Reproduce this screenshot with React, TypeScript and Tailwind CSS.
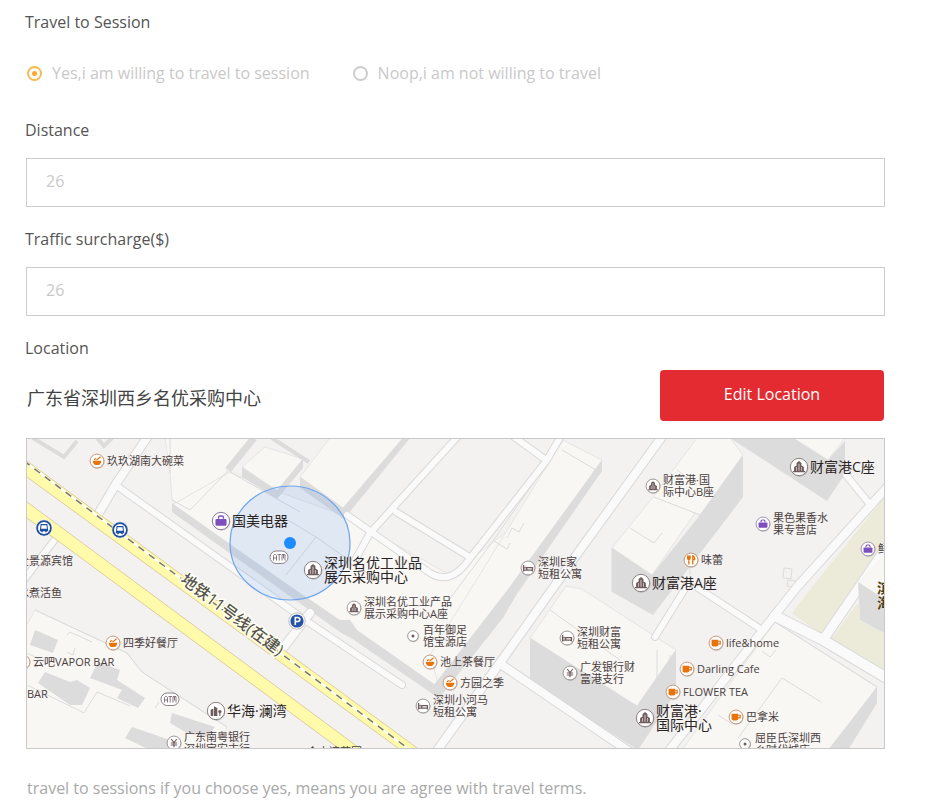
import { useState } from "react";

type IconKind =
  | "bowl" | "tower" | "bag" | "cup" | "bed" | "yen"
  | "atm" | "fork" | "dot" | "parking" | "bus" | "block" | "none";

type Place = {
  icon: IconKind;
  x: number;
  y: number;
  lines?: string[];
  large?: boolean;
};

const ORIGIN = { x: 27, y: 439 };

const PLACES: Place[] = [
  { icon: "bowl", x: 97, y: 461, lines: ["玖玖湖南大碗菜"] },
  { icon: "bag", x: 221, y: 521, lines: ["国美电器"], large: true },
  { icon: "atm", x: 279, y: 557 },
  { icon: "tower", x: 313, y: 570, lines: ["深圳名优工业品", "展示采购中心"], large: true },
  { icon: "tower", x: 354, y: 608, lines: ["深圳名优工业产品", "展示采购中心A座"] },
  { icon: "dot", x: 413, y: 636, lines: ["百年御足", "馆宝源店"] },
  { icon: "bowl", x: 430, y: 662, lines: ["池上茶餐厅"] },
  { icon: "bowl", x: 450, y: 683, lines: ["方园之季"] },
  { icon: "bed", x: 423, y: 706, lines: ["深圳小河马", "短租公寓"] },
  { icon: "bus", x: 44, y: 528 },
  { icon: "bus", x: 120, y: 530 },
  { icon: "none", x: 8, y: 561, lines: ["全景源宾馆"] },
  { icon: "none", x: 8, y: 593, lines: ["水煮活鱼"] },
  { icon: "bowl", x: 113, y: 643, lines: ["四季好餐厅"] },
  { icon: "bowl", x: 23, y: 662, lines: ["云吧VAPOR BAR"] },
  { icon: "none", x: 17, y: 694, lines: ["BAR"] },
  { icon: "atm", x: 170, y: 699 },
  { icon: "block", x: 216, y: 711, lines: ["华海·澜湾"], large: true },
  { icon: "yen", x: 174, y: 743, lines: ["广东南粤银行", "深圳宝安支行"] },
  { icon: "none", x: 297, y: 752, lines: ["金水湾花园"] },
  { icon: "parking", x: 297, y: 621 },
  { icon: "bed", x: 528, y: 568, lines: ["深圳E家", "短租公寓"] },
  { icon: "tower", x: 653, y: 486, lines: ["财富港·国", "际中心B座"] },
  { icon: "tower", x: 799, y: 467, lines: ["财富港C座"], large: true },
  { icon: "bag", x: 763, y: 524, lines: ["果色果香水", "果专营店"] },
  { icon: "fork", x: 691, y: 560, lines: ["味蕾"] },
  { icon: "tower", x: 641, y: 583, lines: ["财富港A座"], large: true },
  { icon: "bag", x: 868, y: 549, lines: ["鲜果园"] },
  { icon: "bed", x: 567, y: 638, lines: ["深圳财富", "短租公寓"] },
  { icon: "yen", x: 570, y: 673, lines: ["广发银行财", "富港支行"] },
  { icon: "cup", x: 716, y: 643, lines: ["life&home"] },
  { icon: "cup", x: 687, y: 669, lines: ["Darling Cafe"] },
  { icon: "cup", x: 673, y: 692, lines: ["FLOWER TEA"] },
  { icon: "tower", x: 645, y: 718, lines: ["财富港·", "国际中心"], large: true },
  { icon: "cup", x: 736, y: 717, lines: ["巴拿米"] },
  { icon: "dot", x: 745, y: 744, lines: ["屈臣氏深圳西", "乡时代城店"] },
];

const ROADS: { d: string; w: number }[] = [
  { d: "M148 436 L116 484 L97 516", w: 8 },
  { d: "M117 486 L308 622 L402 685", w: 6 },
  { d: "M310 613 L283 648", w: 8 },
  { d: "M56 538 L24 580", w: 6 },
  { d: "M460 434 L370 533 L354 562", w: 6 },
  { d: "M347 515 L430 573 Q448 584 464 566 L547 460 L562 434", w: 6 },
  { d: "M396 512 L468 556", w: 6 },
  { d: "M510 434 L546 460", w: 6 },
  { d: "M664 434 L580 550 L507 653 L436 752", w: 8 },
  { d: "M502 665 L630 752", w: 8 },
  { d: "M890 484 L797 587 L760 634 L668 752", w: 8 },
  { d: "M846 475 L868 502", w: 6 },
  { d: "M688 584 L655 637", w: 6 },
  { d: "M698 588 L762 630", w: 6 },
  { d: "M775 616 L823 640 L890 680", w: 10 },
  { d: "M823 640 L886 548", w: 9 },
];

const ROOFS = [
  "165,438 252,438 230,467 225,474 190,510 172,500 170,473",
  "172,505 230,472 262,486 343,515 450,575 535,510 600,462 520,590 437,692 340,622 290,590",
  "265,447 303,459 277,492 242,467",
  "330,438 403,438 343,508 300,477",
  "563,440 602,460 508,593 440,690 430,655",
  "697,438 730,438 743,455 700,515 695,513 652,575 612,548 653,497",
  "793,438 845,438 828,460",
  "566,586 582,589 676,650 637,706 530,638",
  "775,622 877,687 830,750 682,750",
  "35,610 127,653 142,672 227,727 218,750 24,750 24,630",
];

const SIDES = [
  "242,467 277,490 303,459 303,468 277,499 242,477",
  "300,477 343,508 403,438 410,438 344,519 300,488",
  "602,460 602,471 518,592 503,618 440,697 430,690 505,593",
  "172,503 230,544 290,586 340,620 350,620 357,630 437,686 437,697 354,640 340,632 172,512",
  "612,548 652,575 700,515 743,455 743,497 653,615 612,592",
  "730,438 793,438 828,460 845,441 845,474 827,501",
  "530,638 637,706 676,650 676,692 638,750 530,681",
  "877,687 877,703 848,750 828,750",
  "35,630 58,640 53,653 30,645",
  "45,672 70,682 77,680 90,688 82,705 70,705 38,683",
  "98,662 120,670 117,680 145,698 138,708 117,698 122,690 90,678",
  "172,713 215,727 207,737 187,733 170,723",
  "132,727 170,740 167,750 150,750 125,738",
];

const DETAILS =
  "M170 473V438 M172 500L190 510L225 474 M67 635L70 632L92 642 M67 652L73 655L75 648 M27 653L45 662 M27 685L84 713L97 692L130 706 M35 610L127 653L142 672L227 727 M155 708L159 702 M230 472L300 512 M286 575L316 537L288 520 M316 537L380 582 M494 541L507 549L510 543 M507 538L512 528L519 532L524 523 M563 440L493 541L440 612 M562 450L596 470 M630 528L654 543L662 533 M654 497L700 515 M677 470L697 485 M612 548V592 M784 568l8 1l-1 10l-8-1z M788 580l8 1l-1 7l-8-2z M550 610L620 660 M595 660L610 669L616 660 M762 651L770 657L776 650 M738 738L782 678L821 702 M775 622L877 687 M718 715L732 724 M657 650V722 M670 655V700 M690 575V556";

function Glyph({ kind }: { kind: IconKind }) {
  switch (kind) {
    case "bowl":
      return (
        <g fill="#e8730c">
          <path d="M4.200 8.600h9.600c0 3-1.800 5-4.800 5s-4.800-2-4.800-5z" />
          <path d="M8.500 8l4.500-3.800M6 8c0-1.200.8-1.800 2.200-1.800" stroke="#e8730c" strokeWidth="1.400" fill="none" />
        </g>
      );
    case "tower":
      return (
        <path fill="#705c5c" d="M3.600 13.800v-1.200h1V9l2.200-1.400V5.400L9 3.600l2.200 1.800v2.200L13.400 9v3.600h1v1.200z M8.700 6v6.400h.6V6z M6.700 9v3.400h.5V9z M10.800 9v3.400h.5V9z" fillRule="evenodd" />
      );
    case "block":
      return (
        <g fill="#705c5c">
          <path d="M4.200 13.400V7.800l2.400-1v6.600zM7.200 13.400V4.800l3 1.600v7z" />
          <circle cx="12.500" cy="9.500" r="1.500" />
          <path d="M12 10h1v3.400h-1z" />
        </g>
      );
    case "bag":
      return (
        <g>
          <rect x="4" y="7.200" width="10" height="6" rx="1" fill="#7e50bd" />
          <path d="M6.800 7V5.800q0-1.300 1.300-1.300h1.800q1.300 0 1.300 1.300V7" stroke="#7e50bd" strokeWidth="1.300" fill="none" />
        </g>
      );
    case "cup":
      return (
        <g>
          <path d="M4 5.400h7.600v5.600q0 2-2 2H6q-2 0-2-2z" fill="#e8730c" />
          <path d="M11.400 7h2.400v3h-2.400" stroke="#e8730c" strokeWidth="1.300" fill="none" />
        </g>
      );
    case "bed":
      return <path d="M4 5.500v7.500M4 11.300h10M14 13V8.500H7.600v2.600M5.800 7.600v2" stroke="#705c5c" strokeWidth="1.500" fill="none" />;
    case "yen":
      return <path d="M5.800 4.500L9 8.500l3.200-4M9 8.500v5.200M5.400 9h7.200M5.400 11.200h7.200" stroke="#705c5c" strokeWidth="1.300" fill="none" />;
    case "fork":
      return <path d="M5.200 4v3q0 1.400 1.400 1.400T8 7V4M6.600 4v10M11 14V4.300q2.200.5 2.200 4.200H11" stroke="#e8730c" strokeWidth="1.500" fill="none" />;
    case "dot":
      return <circle cx="9" cy="9" r="1.700" fill="#705c5c" />;
    default:
      return null;
  }
}

function PlaceIcon({ kind, large }: { kind: IconKind; large?: boolean }) {
  if (kind === "none") return <span className="block size-4" />;
  if (kind === "atm") {
    return (
      <svg className="block h-4 w-5" viewBox="0 0 20 16">
        <rect x="1" y="2" width="18" height="12.500" rx="6.200" fill="#fff" stroke="#8d7f86" />
        <path d="M4.500 11.500V6.500l1-1h1l1 1v5M4.500 9h3M8.500 5.500h3.500M10.200 5.500v6M13 11.500v-6h3v6M14.500 5.500v4" stroke="#7a6a72" strokeWidth=".9" fill="none" />
      </svg>
    );
  }
  if (kind === "bus" || kind === "parking") {
    return (
      <svg className="block size-[18px]" viewBox="0 0 18 18">
        <circle cx="9" cy="9" r="8.200" fill={kind === "bus" ? "#1f4f9e" : "#fff"} stroke={kind === "bus" ? "#fff" : "#a9a9b5"} strokeWidth=".7" />
        {kind === "bus" ? (
          <>
            <circle cx="9" cy="9" r="6" fill="#fff" />
            <path fillRule="evenodd" fill="#1f4f9e" d="M5.600 5h6.800l.8 7.300h-1.500v1h-1.500v-1H7.800v1H6.300v-1H4.800zM6.500 6.200l-.4 3.600h5.800l-.4-3.600z" />
          </>
        ) : (
          <>
            <circle cx="9" cy="9" r="6.600" fill="#2454a8" />
            <path d="M7.300 13V5.500h2.500q2 0 2 2t-2 2H7.300" stroke="#fff" strokeWidth="1.600" fill="none" />
          </>
        )}
      </svg>
    );
  }
  const ring =
    kind === "bowl" || kind === "cup" || kind === "fork" ? "#b98263" : kind === "bag" ? "#8a76a6" : "#8d7f80";
  const small = kind === "dot";
  return (
    <svg className={large ? "block size-5" : "block size-4"} viewBox="0 0 18 18">
      <circle cx="9.500" cy="9.700" r={small ? 6.300 : 8} fill="#000" opacity=".18" />
      <circle cx="9" cy="9" r={small ? 6 : 7.800} fill="#fff" stroke={ring} strokeWidth=".9" />
      <Glyph kind={kind} />
    </svg>
  );
}

function PlacePin({ place }: { place: Place }) {
  const { icon, x, y, lines, large } = place;
  const half = icon === "atm" || large ? 10 : icon === "bus" || icon === "parking" ? 9 : 8;
  return (
    <div
      className={
        large
          ? "absolute flex -translate-y-1/2 items-center gap-px"
          : "absolute flex -translate-y-1/2 items-center gap-0.5"
      }
      style={{ left: x - ORIGIN.x - half, top: y - ORIGIN.y }}
    >
      <PlaceIcon kind={icon} large={large} />
      {lines && (
        <div
          className={
            large
              ? "whitespace-nowrap text-[14px] leading-[14px] text-[#2b2424]"
              : "whitespace-nowrap text-[11px] leading-[12px] text-[#4b4040]"
          }
        >
          {lines.map((line) => (
            <div key={line}>{line}</div>
          ))}
        </div>
      )}
    </div>
  );
}

function LocationMap() {
  return (
    <div
      role="img"
      aria-label="Map"
      className="relative mt-[17px] ml-px h-[311px] overflow-hidden border border-[#c9c9c9] bg-[#f3f2f0] font-['Open_Sans','Noto_Sans_CJK_SC',sans-serif]"
    >
      <svg className="absolute top-0 left-0 h-[309px] w-[857px]" viewBox="27 439 857 309">
        <polygon points="886,495 804,597 792,613 820,634 886,548" fill="#ecebda" />
        <polygon points="830,640 857,604 886,622 886,674" fill="#ecebda" />
        {ROOFS.map((p) => (
          <polygon key={p} points={p} fill="#f8f7f4" stroke="#e6e5e3" strokeWidth="1" />
        ))}
        {SIDES.map((p) => (
          <polygon key={p} points={p} fill="#dcdcdc" />
        ))}
        <g fill="none" stroke="#dcdcdc">
          <path d="M33 438L64 457L77 441 M97 438L104 446L112 438" strokeWidth="4" />
          <path d="M254 438L228 470" strokeWidth="7" />
          <path d="M272 438L309 462" strokeWidth="4" />
          <path d={DETAILS} strokeWidth="1" />
        </g>
        <g fill="none" strokeLinejoin="round" strokeLinecap="round">
          {ROADS.map((r) => (
            <path key={r.d} d={r.d} stroke="#d9d9d9" strokeWidth={r.w + 2} />
          ))}
          {ROADS.map((r) => (
            <path key={r.d} d={r.d} stroke="#fafafa" strokeWidth={r.w} />
          ))}
        </g>
        <polygon points="858,582 886,552 886,634 860,620" fill="#f8f7f4" />
        <polygon points="858,582 886,600 886,634 860,620" fill="#dcdcdc" />
        <polygon points="20,456 27,461 417,748 424,753 405,753 398,748 27,477 20,472" fill="#fffbaa" stroke="#dccda0" />
        <polygon points="20,497 27,502 358,747 365,753 345,753 337,747 27,518 20,513" fill="#fffbaa" stroke="#dccda0" />
        <path d="M24 461L410 750" stroke="#fff" strokeWidth="2" />
        <path d="M24 461L410 750" stroke="#77776c" strokeWidth="1.500" strokeDasharray="7 6" />
        <text
          transform="translate(183 577) rotate(37)"
          dominantBaseline="central"
          className="fill-[#55544c] stroke-[#fffef0] stroke-3 text-[16px] font-medium [paint-order:stroke]"
        >
          地铁11号线(在建)
        </text>
        <ellipse cx="290" cy="543" rx="60" ry="57" fill="#3c82f0" fillOpacity=".13" stroke="#6ea5ef" strokeWidth="1.200" />
        <circle cx="290" cy="543" r="6" fill="#1e8bff" />
      </svg>
      {PLACES.map((place) => (
        <PlacePin key={`${place.x}-${place.y}`} place={place} />
      ))}
      <div className="absolute top-[141px] left-[850px] w-4 text-[14px] leading-[15px] font-bold text-[#4f3c14]">
        滨海
      </div>
    </div>
  );
}

function Field({ id, label }: { id: string; label: string }) {
  const [value, setValue] = useState("26");
  return (
    <div className="mb-5">
      <label htmlFor={id} className="block">{label}</label>
      <input
        id={id}
        type="text"
        value={value}
        onChange={(e) => setValue(e.target.value)}
        className="mt-4 ml-px block h-[49px] w-[calc(100%-1px)] border border-[#cccccc] bg-white px-[19px] pb-1 text-[#c9c9c9] outline-none"
      />
    </div>
  );
}

function Choice({ label, value, checked, onSelect }: {
  label: string;
  value: string;
  checked: boolean;
  onSelect: (value: string) => void;
}) {
  return (
    <label className="flex items-center gap-2.5 text-[#c9c9c9]">
      <input
        type="radio"
        name="travel"
        value={value}
        checked={checked}
        onChange={() => onSelect(value)}
        className="grid size-[15px] appearance-none place-items-center rounded-full border-2 border-[#cccccc] before:size-[5px] before:rounded-full checked:border-[#fbb850] checked:before:bg-[#fba62f]"
      />
      {label}
    </label>
  );
}

export default function App() {
  const [travel, setTravel] = useState("yes");
  return (
    <main className="bg-white pt-[10px] pr-11 pb-3 pl-[25px] font-['Open_Sans','Noto_Sans_CJK_SC',sans-serif] text-[16px] leading-6 text-[#555555]">
      <fieldset className="mb-[33px]">
        <legend>Travel to Session</legend>
        <div className="mt-[27px] ml-0.5 flex flex-wrap gap-x-[43px]">
          <Choice label="Yes,i am willing to travel to session" value="yes" checked={travel === "yes"} onSelect={setTravel} />
          <Choice label="Noop,i am not willing to travel" value="no" checked={travel === "no"} onSelect={setTravel} />
        </div>
      </fieldset>
      <Field id="distance" label="Distance" />
      <Field id="surcharge" label="Traffic surcharge($)" />
      <section>
        <h2>Location</h2>
        <div className="mt-[10px] mr-px ml-0.5 flex items-center justify-between gap-4">
          <p className="pt-1 text-[18px] text-[#444444]">广东省深圳西乡名优采购中心</p>
          <button type="button" className="h-[51px] w-56 shrink-0 rounded bg-[#e32b31] pb-1 text-white">
            Edit Location
          </button>
        </div>
        <LocationMap />
      </section>
      <p className="mt-[27px] ml-0.5 text-[#a9a9a9]">
        travel to sessions if you choose yes, means you are agree with travel terms.
      </p>
    </main>
  );
}
